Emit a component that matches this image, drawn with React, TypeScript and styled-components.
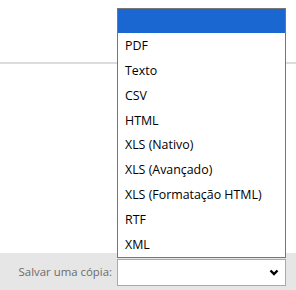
import React from "react";
import styled, { createGlobalStyle } from "styled-components";

const Global = createGlobalStyle`
  html, body { margin: 0; padding: 0; background: #fff; }
  body { font-family: "Open Sans", "Noto Sans", sans-serif; }
`;

const Page = styled.div`
  width: 296px;
  height: 290px;
  display: flex;
  flex-direction: column;
  overflow: hidden;
`;

const Header = styled.div`
  height: 62px;
  border-bottom: 2px solid #dcdcdc;
  flex: none;
`;

const Content = styled.div`
  flex: 1;
  background: #fff;
`;

const Footer = styled.div`
  height: 37px;
  flex: none;
  background: #e6e6e6;
  display: flex;
  align-items: center;
  justify-content: flex-end;
  padding-right: 10px;
  gap: 5px;
`;

const Label = styled.span`
  flex: none;
  font-size: 11.4px;
  color: #6b6b6b;
  white-space: nowrap;
`;

const SelectWrap = styled.div`
  position: relative;
  flex: none;
  width: 169px;
  height: 27px;
  margin-top: 1px;
`;

const SelectBox = styled.div`
  box-sizing: border-box;
  width: 100%;
  height: 100%;
  background: #fff;
  border: 1px solid #f5a20f;
  display: flex;
  align-items: center;
  justify-content: flex-end;
  padding-right: 6px;
`;

const List = styled.ul`
  position: absolute;
  left: 0;
  bottom: calc(100% + 1px);
  box-sizing: border-box;
  width: 169px;
  margin: 0;
  padding: 0;
  list-style: none;
  background: #fff;
  border: 1px solid #767676;
`;

const Item = styled.li<{ $active?: boolean }>`
  height: 24.8px;
  display: flex;
  align-items: center;
  padding-left: 7px;
  font-size: 12.4px;
  color: #000;
  white-space: nowrap;
  background: ${(p) => (p.$active ? "#1a67d2" : "#fff")};
`;

const options = [
  "",
  "PDF",
  "Texto",
  "CSV",
  "HTML",
  "XLS (Nativo)",
  "XLS (Avançado)",
  "XLS (Formatação HTML)",
  "RTF",
  "XML",
];

export default function App() {
  return (
    <Page>
      <Global />
      <Header />
      <Content />
      <Footer>
        <Label>Salvar uma cópia:</Label>
        <SelectWrap>
          <List>
            {options.map((o, i) => (
              <Item key={i} $active={i === 0}>
                {o}
              </Item>
            ))}
          </List>
          <SelectBox>
            <svg width="10" height="7" viewBox="0 0 10 7">
              <polyline points="1.5,1.5 5,5 8.5,1.5" fill="none" stroke="#000" strokeWidth="2.4" />
            </svg>
          </SelectBox>
        </SelectWrap>
      </Footer>
    </Page>
  );
}
